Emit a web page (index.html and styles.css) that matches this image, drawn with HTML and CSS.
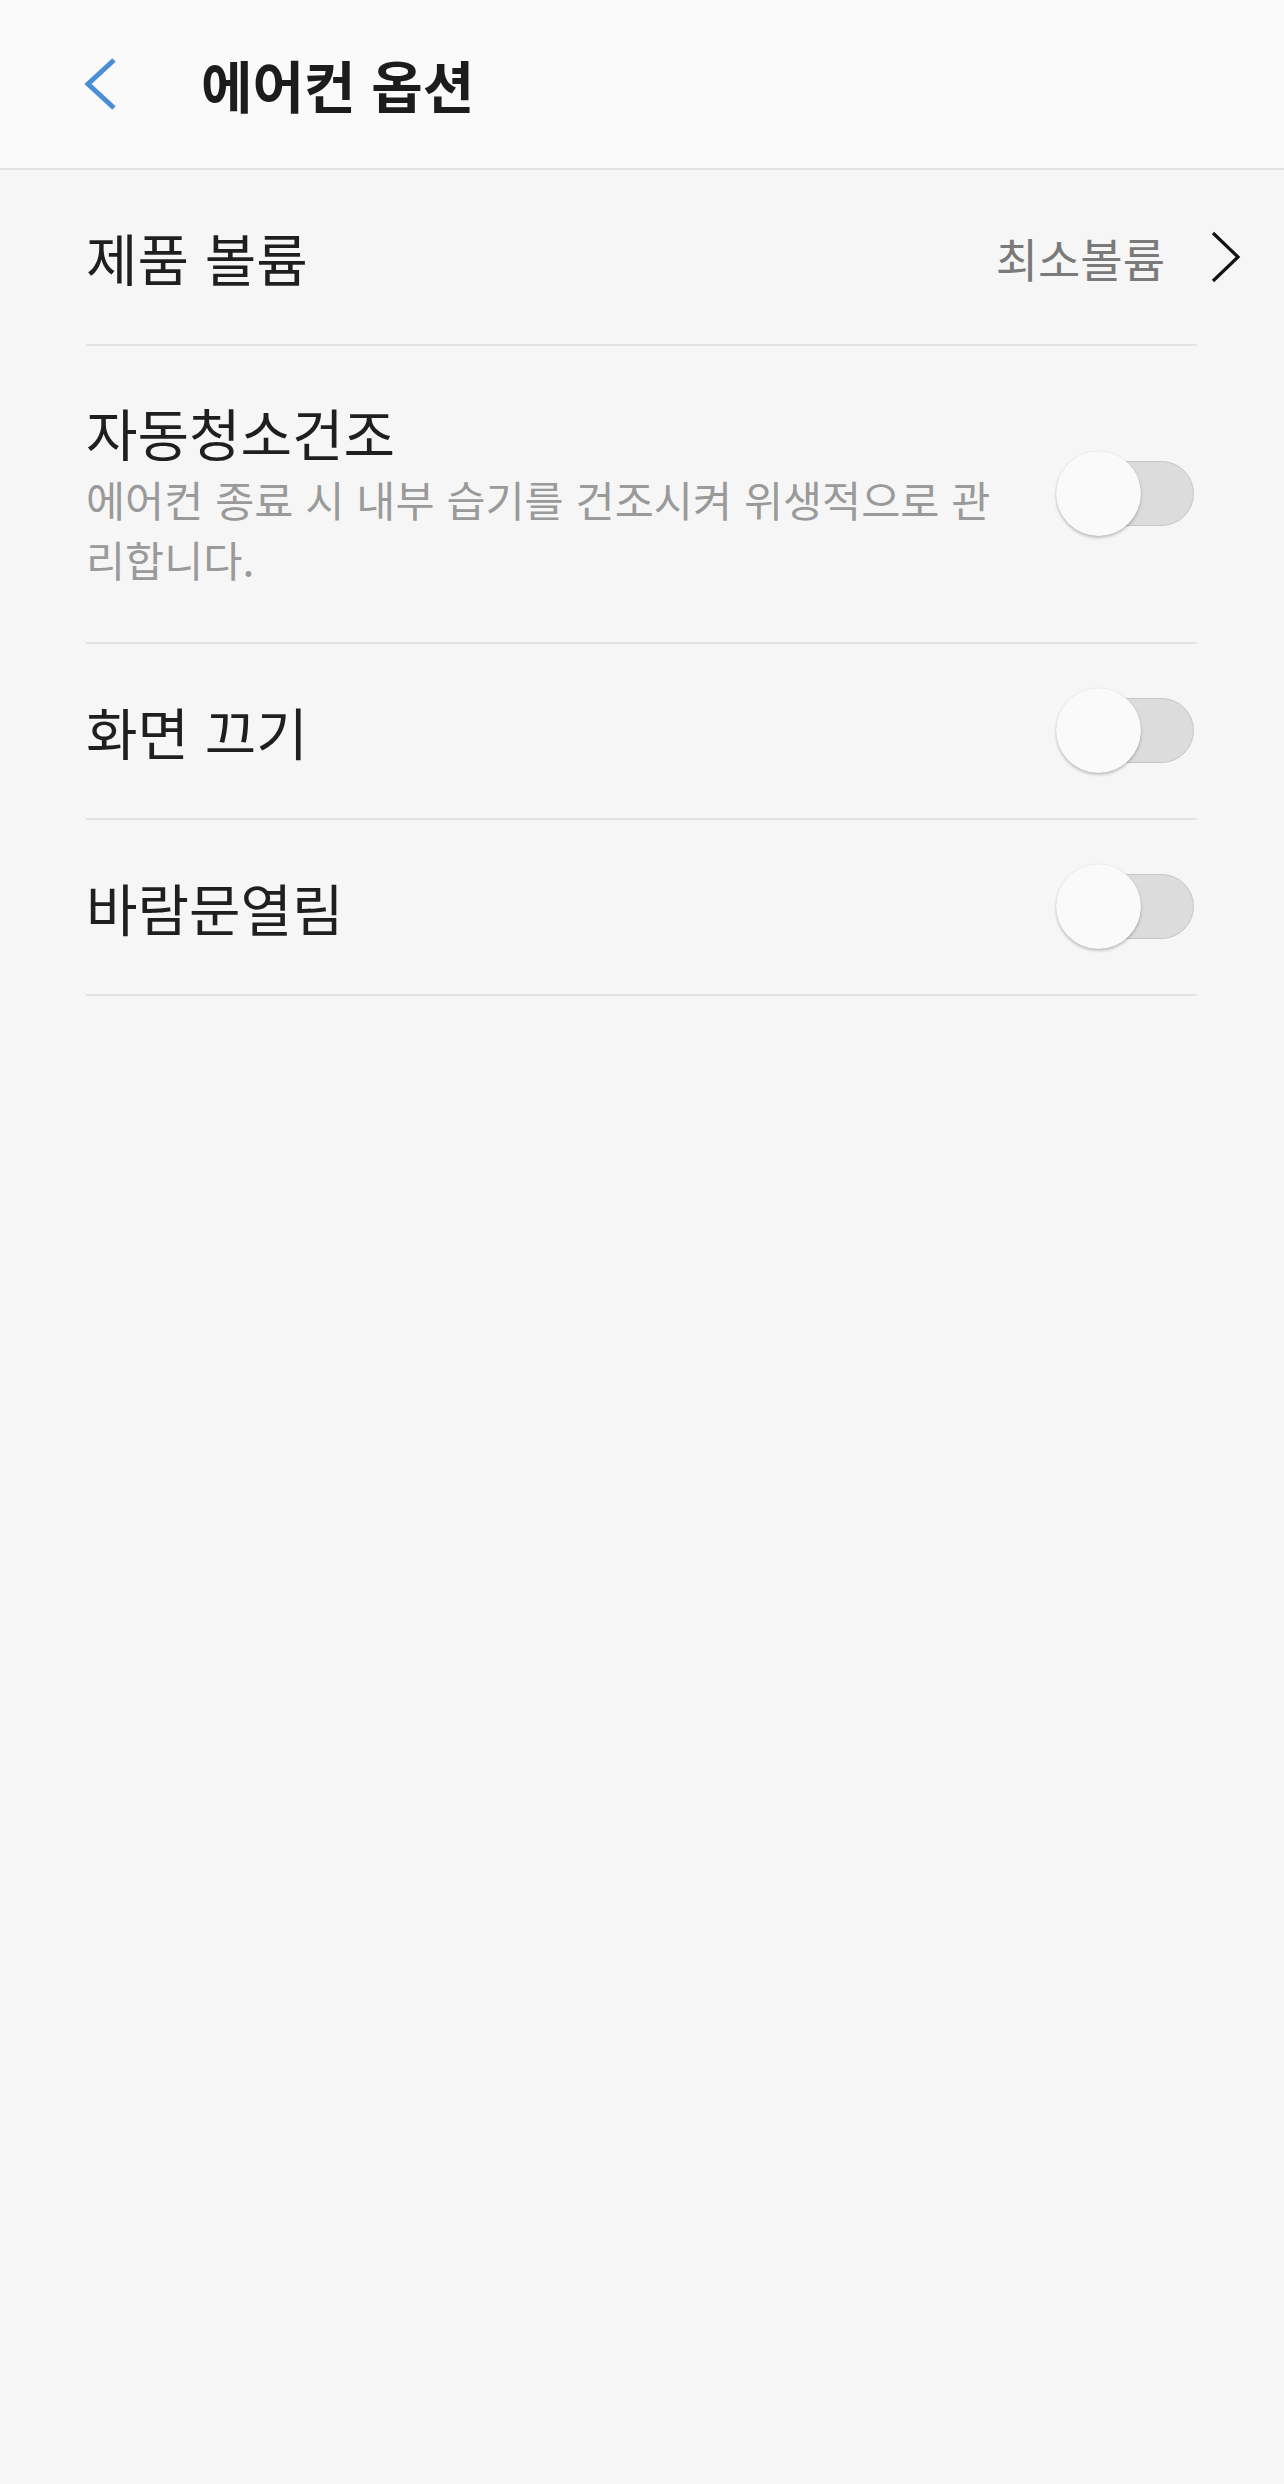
FILE: index.html
```html
<!DOCTYPE html>
<html lang="ko">
<head>
  <meta charset="utf-8">
  <title>에어컨 옵션</title>
  <link rel="stylesheet" href="styles.css">
</head>
<body>
  <div class="app-bar">
    <a class="back-button" href="#">
      <svg width="32" height="52" viewBox="0 0 32 52">
        <polyline points="30,2 4,26 30,50" fill="none" stroke="#4a8fd6" stroke-width="5" />
      </svg>
    </a>
    <h1 class="app-title">에어컨 옵션</h1>
  </div>

  <div class="settings-list">
    <div class="setting-row">
      <div class="setting-text">
        <div class="setting-label">제품 볼륨</div>
      </div>
      <div class="setting-value">최소볼륨</div>
      <div class="row-chevron">
        <svg width="30" height="52" viewBox="0 0 30 52">
          <polyline points="2,2 27,26 2,50" fill="none" stroke="#111" stroke-width="3.2" />
        </svg>
      </div>
    </div>

    <div class="setting-row tall">
      <div class="setting-text">
        <div class="setting-label">자동청소건조</div>
        <div class="setting-desc">에어컨 종료 시 내부 습기를 건조시켜 위생적으로 관리합니다.</div>
      </div>
      <div class="switch">
        <span class="switch-track"></span>
        <span class="switch-thumb"></span>
      </div>
    </div>

    <div class="setting-row">
      <div class="setting-text">
        <div class="setting-label">화면 끄기</div>
      </div>
      <div class="switch">
        <span class="switch-track"></span>
        <span class="switch-thumb"></span>
      </div>
    </div>

    <div class="setting-row">
      <div class="setting-text">
        <div class="setting-label">바람문열림</div>
      </div>
      <div class="switch">
        <span class="switch-track"></span>
        <span class="switch-thumb"></span>
      </div>
    </div>
  </div>
</body>
</html>
```

FILE: styles.css
```css
/* base */
body {
  margin: 0;
  padding: 0;
  background-color: #f6f6f6;
  color: #1f1f1f;
  font-family: "Noto Sans CJK KR", "Noto Sans", sans-serif;
}

/* top app bar */
.app-bar {
  display: flex;
  align-items: center;
  height: 168px;
  padding-left: 84px;
  background-color: #fafafa;
  border-bottom: 2px solid #e3e3e3;
}

.back-button {
  display: flex;
  width: 32px;
  height: 52px;
}

.app-title {
  margin: 0 0 0 85px;
  font-size: 56px;
  font-weight: 700;
  line-height: 1;
  color: #1c1c1c;
}

/* settings list */
.settings-list {
  padding: 0 87px 0 86px;
}

.setting-row {
  display: flex;
  align-items: center;
  min-height: 174px;
  border-bottom: 2px solid #e3e3e3;
}

.setting-row.tall {
  min-height: 296px;
}

.setting-text {
  flex: 1;
  max-width: 920px;
}

.setting-label {
  font-size: 56px;
  line-height: 66px;
  color: #1f1f1f;
}

.setting-desc {
  margin-top: 4px;
  font-size: 42.5px;
  line-height: 60px;
  color: #9a9a9a;
}

.setting-value {
  font-size: 46px;
  color: #7a7a7a;
  margin-right: 46px;
}

.row-chevron {
  display: flex;
  margin-right: -44px;
}

/* toggle switch, off state */
.switch {
  position: relative;
  width: 138px;
  height: 86px;
  margin-left: auto;
  margin-right: 3px;
}

.switch-track {
  position: absolute;
  left: 6px;
  right: 0;
  top: 10px;
  height: 65px;
  border-radius: 33px;
  background-color: #dcdcdc;
  border: 1px solid #c6c6c6;
  box-sizing: border-box;
}

.switch-thumb {
  position: absolute;
  left: 0;
  top: 0;
  width: 85px;
  height: 85px;
  border-radius: 50%;
  background-color: #fafafa;
  box-shadow: 0 2px 3px rgba(0, 0, 0, 0.22), 0 0 1px rgba(0, 0, 0, 0.15);
}
```
